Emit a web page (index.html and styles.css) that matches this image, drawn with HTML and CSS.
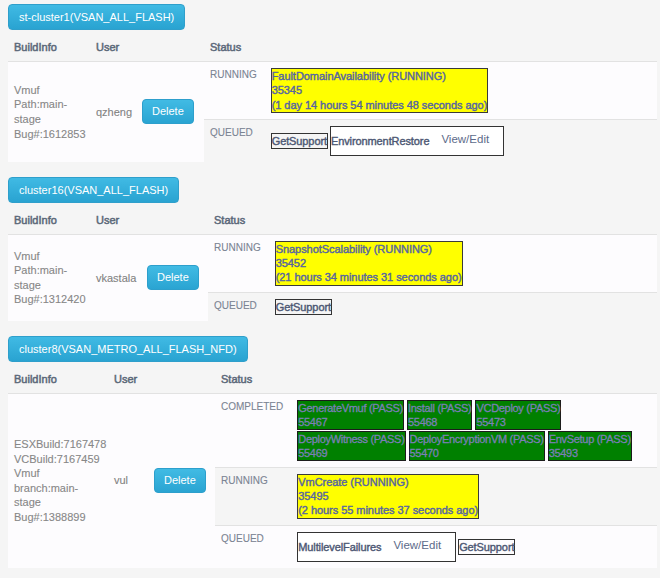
FILE: index.html
```html
<!DOCTYPE html>
<html>
<head>
<meta charset="utf-8">
<link rel="stylesheet" href="styles.css">
</head>
<body>
<div class="cluster">
  <button class="cl-btn">st-cluster1(VSAN_ALL_FLASH)</button>
  <table class="tbl">
    <colgroup><col class="w82"><col class="w46"><col class="w68"><col></colgroup>
    <thead><tr><th>BuildInfo</th><th>User</th><th></th><th>Status</th></tr></thead>
    <tbody>
      <tr>
        <td class="build">Vmuf<br>Path:main-<br>stage<br>Bug#:1612853</td>
        <td class="user">qzheng</td>
        <td class="del"><button class="btn-del">Delete</button></td>
        <td class="status">
          <table class="inner">
            <tr>
              <td class="lbl">RUNNING</td>
              <td class="jobs"><div class="job run">FaultDomainAvailability (RUNNING)<br>35345<br>(1 day 14 hours 54 minutes 48 seconds ago)</div></td>
            </tr>
            <tr>
              <td class="lbl">QUEUED</td>
              <td class="jobs">
                <div class="queue">
                  <span class="task">GetSupport</span>
                  <span class="task wide">EnvironmentRestore<a class="view">View/Edit</a></span>
                </div>
              </td>
            </tr>
          </table>
        </td>
      </tr>
    </tbody>
  </table>
</div>

<div class="cluster">
  <button class="cl-btn">cluster16(VSAN_ALL_FLASH)</button>
  <table class="tbl">
    <colgroup><col class="w82"><col class="w51"><col class="w67"><col></colgroup>
    <thead><tr><th>BuildInfo</th><th>User</th><th></th><th>Status</th></tr></thead>
    <tbody>
      <tr>
        <td class="build">Vmuf<br>Path:main-<br>stage<br>Bug#:1312420</td>
        <td class="user">vkastala</td>
        <td class="del"><button class="btn-del">Delete</button></td>
        <td class="status">
          <table class="inner">
            <tr>
              <td class="lbl">RUNNING</td>
              <td class="jobs"><div class="job run">SnapshotScalability (RUNNING)<br>35452<br>(21 hours 34 minutes 31 seconds ago)</div></td>
            </tr>
            <tr>
              <td class="lbl">QUEUED</td>
              <td class="jobs">
                <div class="queue">
                  <span class="task">GetSupport</span>
                </div>
              </td>
            </tr>
          </table>
        </td>
      </tr>
    </tbody>
  </table>
</div>

<div class="cluster">
  <button class="cl-btn">cluster8(VSAN_METRO_ALL_FLASH_NFD)</button>
  <table class="tbl">
    <colgroup><col class="w100"><col class="w40"><col class="w67"><col></colgroup>
    <thead><tr><th>BuildInfo</th><th>User</th><th></th><th>Status</th></tr></thead>
    <tbody>
      <tr>
        <td class="build">ESXBuild:7167478<br>VCBuild:7167459<br>Vmuf<br>branch:main-<br>stage<br>Bug#:1388899</td>
        <td class="user">vul</td>
        <td class="del"><button class="btn-del">Delete</button></td>
        <td class="status">
          <table class="inner">
            <tr>
              <td class="lbl">COMPLETED</td>
              <td class="jobs">
                <div class="pass-grid">
                  <div class="pass-row">
                    <div class="job pass">GenerateVmuf (PASS)<br>55467</div>
                    <div class="job pass">Install (PASS)<br>55468</div>
                    <div class="job pass">VCDeploy (PASS)<br>55473</div>
                  </div>
                  <div class="pass-row">
                    <div class="job pass">DeployWitness (PASS)<br>55469</div>
                    <div class="job pass">DeployEncryptionVM (PASS)<br>55470</div>
                    <div class="job pass">EnvSetup (PASS)<br>35493</div>
                  </div>
                </div>
              </td>
            </tr>
            <tr>
              <td class="lbl">RUNNING</td>
              <td class="jobs"><div class="job run">VmCreate (RUNNING)<br>35495<br>(2 hours 55 minutes 37 seconds ago)</div></td>
            </tr>
            <tr>
              <td class="lbl">QUEUED</td>
              <td class="jobs">
                <div class="queue">
                  <span class="task wide">MultilevelFailures<a class="view">View/Edit</a></span>
                  <span class="task">GetSupport</span>
                </div>
              </td>
            </tr>
          </table>
        </td>
      </tr>
    </tbody>
  </table>
</div>
</body>
</html>
```

FILE: styles.css
```css
* { box-sizing: border-box; }
html, body { margin: 0; }
body {
  background: #f5f5f5;
  padding: 4px 0 0 8px;
  font-family: "Liberation Sans", Arial, sans-serif;
  font-size: 11px;
  color: #858585;
}
.cluster { width: 649px; margin-bottom: 15px; }
.cl-btn {
  display: block;
  height: 26px;
  padding: 0 10px;
  line-height: 24px;
  font-family: "Liberation Sans", Arial, sans-serif;
  font-size: 11px;
  color: #fff;
  background: linear-gradient(#40bae4, #29a3d1);
  border: 1px solid #2f9fcb;
  border-radius: 4px;
}
.tbl { width: 649px; border-collapse: collapse; table-layout: fixed; }
.w82 { width: 82px; }
.w46 { width: 46px; }
.w51 { width: 51px; }
.w40 { width: 40px; }
.w100 { width: 100px; }
.w67 { width: 67px; }
.w68 { width: 68px; }
.tbl th {
  text-align: left;
  font-weight: normal;
  padding: 9px 6px 6px;
  height: 31px;
  line-height: 16px;
  font-size: 11px;
  color: #5b6879;
  -webkit-text-stroke: 0.5px #5b6879;
}
.tbl > tbody > tr > td {
  border-top: 1px solid #e2e2e2;
  background: #fdfcfe;
  vertical-align: middle;
  padding: 6px;
  line-height: 14.6px;
  white-space: nowrap;
}
.tbl > tbody > tr > td.status {
  padding: 0;
  background: transparent;
  vertical-align: top;
}
.build { color: #878787; -webkit-text-stroke: 0.1px #878787; }
.user { color: #828282; -webkit-text-stroke: 0.1px #828282; }
.btn-del {
  height: 25px;
  padding: 0 9px;
  line-height: 23px;
  font-family: "Liberation Sans", Arial, sans-serif;
  font-size: 11px;
  color: #fff;
  background: linear-gradient(#41bbe4, #2aa4d2);
  border: 1px solid #2d9fcc;
  border-radius: 4px;
}
.inner { width: 100%; border-collapse: collapse; }
.inner td { padding: 6px 6px 6px; vertical-align: top; }
.inner tr:nth-child(odd) td { background: #fdfcfe; }
.inner tr + tr td { border-top: 1px solid #e2e2e2; }
.inner .lbl {
  width: 1px;
  white-space: nowrap;
  padding-right: 8px;
  font-size: 10px;
  line-height: 14px;
  color: #7b8493;
  -webkit-text-stroke: 0.1px #7b8493;
}
.job {
  display: inline-block;
  border: 1px solid #3a3a3a;
  font-size: 11px;
  line-height: 14.3px;
  color: #5565a2;
  -webkit-text-stroke: 0.4px #5565a2;
  white-space: nowrap;
  vertical-align: top;
  letter-spacing: -0.05px;
}
.job.run { background: #ffff00; }
.job.pass {
  background: #008000;
  color: #7a7fb6;
  -webkit-text-stroke: 0.3px #7a7fb6;
  border-color: #1c1c1c;
  line-height: 14px;
  letter-spacing: -0.3px;
}
.pass-grid { display: flex; flex-direction: column; gap: 1px; }
.pass-row { display: flex; gap: 3px; }
.queue { display: flex; gap: 2px; align-items: baseline; }
.task {
  display: inline-block;
  border: 1px solid #333;
  line-height: 14px;
  font-size: 11px;
  color: #4c5773;
  -webkit-text-stroke: 0.4px #4c5773;
  white-space: nowrap;
  letter-spacing: -0.1px;
}
.task.wide { background: #fff; padding-right: 2px; }
.view {
  display: inline-block;
  padding: 4px 12px 8px;
  line-height: 16px;
  font-size: 11.5px;
  color: #5d6b8a;
  -webkit-text-stroke: 0;
  letter-spacing: 0;
  vertical-align: 2px;
}
```
